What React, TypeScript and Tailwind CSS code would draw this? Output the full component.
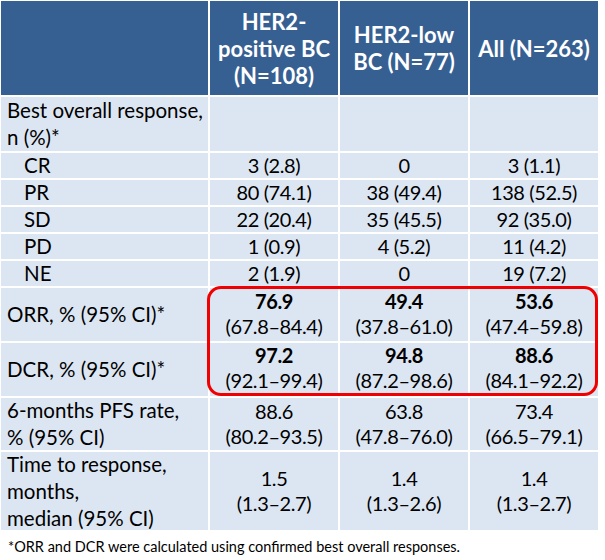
export default function App() {
  const font = { fontFamily: "Lato, 'Liberation Sans', sans-serif" };
  const cell = "bg-[#dce6f2] text-[20.5px] leading-[27px] text-black";
  const num = "bg-[#dce6f2] text-[20px] leading-[25px] tracking-[-0.4px] text-black flex flex-col items-center justify-center text-center";
  const label = `${cell} flex flex-col justify-center pl-[6px]`;
  const sub = `${cell} flex items-center pl-[23px]`;
  const head = "bg-[#376092] flex items-center justify-center text-center text-white font-bold text-[22px] leading-[27px]";

  const simple = [
    ["CR", "3 (2.8)", "0", "3 (1.1)"],
    ["PR", "80 (74.1)", "38 (49.4)", "138 (52.5)"],
    ["SD", "22 (20.4)", "35 (45.5)", "92 (35.0)"],
    ["PD", "1 (0.9)", "4 (5.2)", "11 (4.2)"],
    ["NE", "2 (1.9)", "0", "19 (7.2)"],
  ];

  return (
    <div className="w-[605px] h-[560px] bg-white" style={font}>
      <div className="relative w-[599px]">
        <div className="grid grid-cols-[207px_128px_128px_128px] grid-rows-[94px_54px_25px_25px_25px_25px_25px_53px_53px_52px_78px] gap-[2px] p-px bg-white">
          {/* HEADER */}
          <div className="bg-[#376092]" />
          <div className={head}>
            HER2-<br />positive BC<br />(N=108)
          </div>
          <div className={head}>
            HER2-low<br />BC (N=77)
          </div>
          <div className={head}>All (N=263)</div>

          {/* BEST OVERALL RESPONSE */}
          <div className={label}>
            <span>Best overall response,</span>
            <span>n (%)*</span>
          </div>
          <div className={cell} />
          <div className={cell} />
          <div className={cell} />

          {simple.map((r) => (
            <>
              <div key={r[0]} className={sub}>{r[0]}</div>
              <div className={num}>{r[1]}</div>
              <div className={num}>{r[2]}</div>
              <div className={num}>{r[3]}</div>
            </>
          ))}

          {/* ORR / DCR */}
          <div className={label}>ORR, % (95% CI)*</div>
          <div className={`${num} pb-[2px]`}><b>76.9</b><span>(67.8–84.4)</span></div>
          <div className={`${num} pb-[2px]`}><b>49.4</b><span>(37.8–61.0)</span></div>
          <div className={`${num} pb-[2px]`}><b>53.6</b><span>(47.4–59.8)</span></div>

          <div className={label}>DCR, % (95% CI)*</div>
          <div className={`${num} pb-[3px]`}><b>97.2</b><span>(92.1–99.4)</span></div>
          <div className={`${num} pb-[3px]`}><b>94.8</b><span>(87.2–98.6)</span></div>
          <div className={`${num} pb-[3px]`}><b>88.6</b><span>(84.1–92.2)</span></div>

          {/* PFS */}
          <div className={label}>
            <span>6-months PFS rate,</span>
            <span>% (95% CI)</span>
          </div>
          <div className={num}><span>88.6</span><span>(80.2–93.5)</span></div>
          <div className={num}><span>63.8</span><span>(47.8–76.0)</span></div>
          <div className={num}><span>73.4</span><span>(66.5–79.1)</span></div>

          {/* TIME TO RESPONSE */}
          <div className={label}>
            <span>Time to response,</span>
            <span>months,</span>
            <span>median (95% CI)</span>
          </div>
          <div className={num}><span>1.5</span><span>(1.3–2.7)</span></div>
          <div className={num}><span>1.4</span><span>(1.3–2.6)</span></div>
          <div className={num}><span>1.4</span><span>(1.3–2.7)</span></div>
        </div>

        {/* highlight box */}
        <div className="absolute left-[207px] top-[286px] w-[391px] h-[110px] border-[3px] border-[#f00000] rounded-[14px] pointer-events-none" />
      </div>

      <p className="pl-[8px] pt-[6px] text-[14.5px] leading-[20px] text-black">
        *ORR and DCR were calculated using confirmed best overall responses.
      </p>
    </div>
  );
}
